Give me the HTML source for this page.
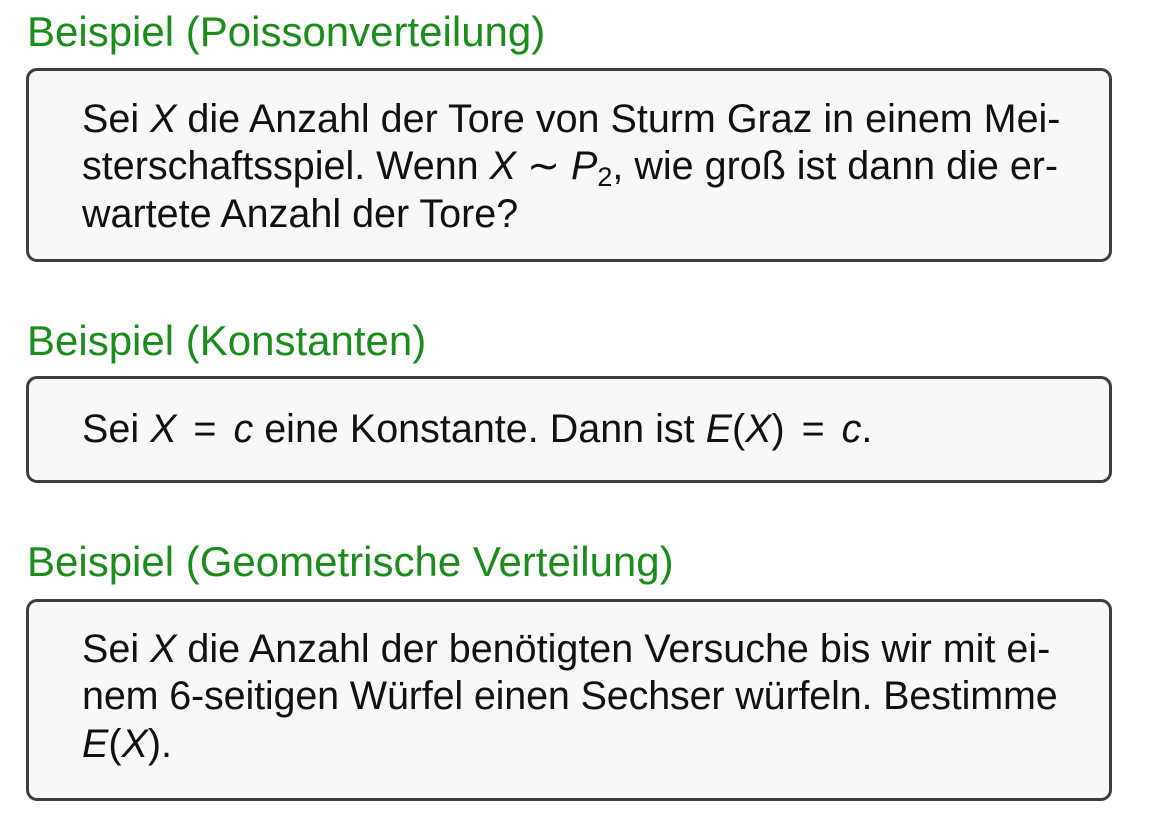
<!DOCTYPE html>
<html><head><meta charset="utf-8"><style>
html,body{margin:0;padding:0;width:1149px;height:817px;background:#fff;overflow:hidden;font-family:"Liberation Sans",sans-serif;}
.h{position:absolute;left:27px;color:#1c8c1c;font-size:42px;line-height:48px;white-space:nowrap;}
.box{position:absolute;left:26px;width:1080px;border:3px solid #3e3e3e;border-radius:11px;background:#f9f7f8;}
.t{position:absolute;left:82px;font-size:39.5px;line-height:48px;color:#111;white-space:nowrap;}
i{font-style:italic;}
.eq{margin:0 6px;}
sub{font-size:27px;vertical-align:-7px;line-height:0;}
</style></head><body>
<div class="h" style="top:8px">Beispiel (Poissonverteilung)</div>
<div class="box" style="top:68px;height:188px"></div>
<div class="t" style="top:95px">Sei <i>X</i> die Anzahl der Tore von Sturm Graz in einem Mei-</div>
<div class="t" style="top:142px">sterschaftsspiel. Wenn <i>X</i> &#8764; <i>P</i><sub>2</sub>, wie groß ist dann die er-</div>
<div class="t" style="top:190px">wartete Anzahl der Tore?</div>

<div class="h" style="top:317px">Beispiel (Konstanten)</div>
<div class="box" style="top:376px;height:101px"></div>
<div class="t" style="top:405px">Sei <i>X</i> <span class="eq">=</span> <i>c</i> eine Konstante. Dann ist <i>E</i>(<i>X</i>) <span class="eq">=</span> <i>c</i>.</div>

<div class="h" style="top:538px">Beispiel (Geometrische Verteilung)</div>
<div class="box" style="top:599px;height:196px"></div>
<div class="t" style="top:625px">Sei <i>X</i> die Anzahl der benötigten Versuche bis wir mit ei-</div>
<div class="t" style="top:672px;letter-spacing:-0.15px">nem 6-seitigen Würfel einen Sechser würfeln. Bestimme</div>
<div class="t" style="top:720px"><i>E</i>(<i>X</i>).</div>
</body></html>
